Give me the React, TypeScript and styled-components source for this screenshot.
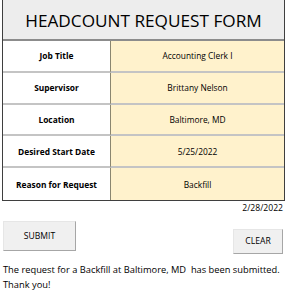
import React from "react";
import styled, { createGlobalStyle } from "styled-components";

const Global = createGlobalStyle`
  html, body {
    margin: 0;
    padding: 0;
    background: #ffffff;
  }
  body {
    font-family: "Open Sans", "Liberation Sans", sans-serif;
    color: #000000;
  }
`;

const Page = styled.div`
  width: 295px;
  height: 300px;
  overflow: hidden;
  display: flex;
  flex-direction: column;
`;

const Form = styled.div`
  margin-left: 2px;
  width: 283px;
  border-left: 1px solid #3f3f3f;
  border-right: 1px solid #3f3f3f;
  border-bottom: 1px solid #3f3f3f;
  box-sizing: border-box;
  display: grid;
  grid-template-columns: 107px 1fr;
`;

const Header = styled.div`
  grid-column: 1 / span 2;
  height: 41px;
  background: #ededed;
  border-bottom: 2px solid #8c8c8c;
  box-sizing: border-box;
  display: flex;
  align-items: center;
  justify-content: center;
  font-size: 17.2px;
  padding-top: 1px;
`;

const Cell = styled.div<{ $value?: boolean; $last?: boolean }>`
  height: 31.8px;
  box-sizing: border-box;
  display: flex;
  align-items: center;
  justify-content: center;
  font-size: 8.4px;
  font-weight: ${(p) => (p.$value ? 400 : 700)};
  background: ${(p) => (p.$value ? "#fff2cc" : "#ffffff")};
  border-left: ${(p) => (p.$value ? "1px solid #8a8670" : "none")};
  border-bottom: ${(p) => (p.$last ? "none" : "2px solid #c4c4c4")};
`;

const DateLine = styled.div`
  width: 283px;
  text-align: right;
  font-size: 8.6px;
  margin-top: 1px;
  line-height: 12px;
`;

const ButtonRow = styled.div`
  display: flex;
  justify-content: space-between;
  align-items: flex-start;
  width: 280px;
  margin-left: 3px;
  margin-top: 7px;
  box-sizing: border-box;
`;

const Button = styled.button<{ $w: number; $h: number; $top: number }>`
  width: ${(p) => p.$w}px;
  height: ${(p) => p.$h}px;
  margin-top: ${(p) => p.$top}px;
  background: #f0f0f0;
  border: none;
  border-top: 1px solid #e6e6e6;
  border-left: 1px solid #e6e6e6;
  border-right: 1px solid #a6a6a6;
  border-bottom: 1px solid #a6a6a6;
  font-family: "Open Sans", "Liberation Sans", sans-serif;
  font-size: 8.6px;
  color: #000000;
  padding: 0;
  display: flex;
  align-items: center;
  justify-content: center;
`;

const Message = styled.div`
  margin-left: 3px;
  margin-top: 8px;
  font-size: 9.3px;
  line-height: 15px;
  white-space: pre-wrap;
`;

const rows = [
  ["Job Title", "Accounting Clerk I"],
  ["Supervisor", "Brittany Nelson"],
  ["Location", "Baltimore, MD"],
  ["Desired Start Date", "5/25/2022"],
  ["Reason for Request", "Backfill"],
];

export default function App() {
  return (
    <Page>
      <Global />
      <Form>
        <Header>HEADCOUNT REQUEST FORM</Header>
        {rows.map(([label, value], i) => (
          <React.Fragment key={label}>
            <Cell $last={i === rows.length - 1}>{label}</Cell>
            <Cell $value $last={i === rows.length - 1}>
              {value}
            </Cell>
          </React.Fragment>
        ))}
      </Form>
      <DateLine>2/28/2022</DateLine>
      <ButtonRow>
        <Button $w={73} $h={30} $top={0}>SUBMIT</Button>
        <Button $w={50} $h={25} $top={8}>CLEAR</Button>
      </ButtonRow>
      <Message>
        {"The request for a Backfill at Baltimore, MD  has been submitted.\nThank you!"}
      </Message>
    </Page>
  );
}
